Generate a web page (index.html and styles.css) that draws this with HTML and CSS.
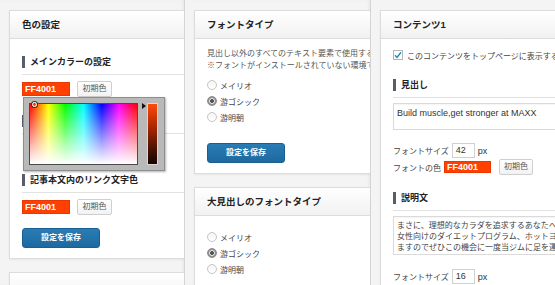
FILE: index.html
```html
<!DOCTYPE html>
<html lang="ja">

<head>
    <meta charset="UTF-8">
    <meta name="viewport" content="width=device-width, initial-scale=1.0">
    <title>テーマ設定</title>
    <link rel="stylesheet" href="styles.css">
</head>

<body>
    <div class="page">
        <!-- 色の設定 -->
        <div class="col col-1">
            <div class="card">
                <div class="card-head">色の設定</div>
                <div class="card-body">
                    <div class="sub"><span>メインカラーの設定</span></div>
                    <div class="color-row">
                        <span class="swatch">FF4001</span>
                        <button class="reset">初期色</button>
                        <div class="picker">
                            <div class="picker-area"><i class="picker-dot"></i></div>
                            <div class="picker-hue"></div>
                        </div>
                    </div>
                    <div class="sub"><span>サブカラーの設定</span></div>
                    <div class="color-row">
                        <span class="swatch swatch-under">FF4001</span>
                        <button class="reset">初期色</button>
                    </div>
                    <div class="sub"><span>記事本文内のリンク文字色</span></div>
                    <div class="color-row">
                        <span class="swatch">FF4001</span>
                        <button class="reset">初期色</button>
                    </div>
                    <button class="save">設定を保存</button>
                </div>
            </div>
            <div class="card">
                <div class="card-head"></div>
            </div>
        </div>

        <!-- フォント -->
        <div class="col col-2">
            <div class="card">
                <div class="card-head">フォントタイプ</div>
                <div class="card-body body-tight">
                    <p class="desc">見出し以外のすべてのテキスト要素で使用するフォントを選択してください。<br>※フォントがインストールされていない環境では代替フォントで表示されます。</p>
                    <div class="radios">
                        <label class="radio"><i class="dot"></i>メイリオ</label>
                        <label class="radio"><i class="dot on"></i>游ゴシック</label>
                        <label class="radio"><i class="dot"></i>游明朝</label>
                    </div>
                    <button class="save save-font">設定を保存</button>
                </div>
            </div>
            <div class="card">
                <div class="card-head">大見出しのフォントタイプ</div>
                <div class="card-body body-radios">
                    <div class="radios">
                        <label class="radio"><i class="dot"></i>メイリオ</label>
                        <label class="radio"><i class="dot on"></i>游ゴシック</label>
                        <label class="radio"><i class="dot"></i>游明朝</label>
                    </div>
                </div>
            </div>
        </div>

        <!-- コンテンツ -->
        <div class="col col-3">
            <div class="card">
                <div class="card-head">コンテンツ1</div>
                <div class="card-body body-content">
                    <div class="check-row">
                        <span class="check">
                            <svg width="8" height="8" viewBox="0 0 8 8"><path d="M1 4.2 L3 6.4 L7 1.2" fill="none" stroke="#1e8cbe" stroke-width="1.4"/></svg>
                        </span>
                        <span>このコンテンツをトップページに表示する</span>
                    </div>
                    <div class="sub sub-gap"><span>見出し</span></div>
                    <div class="field field-title">Build muscle,get stronger at MAXX</div>
                    <div class="opt-row opt-size">
                        フォントサイズ <span class="num">42</span> <span class="unit">px</span>
                    </div>
                    <div class="opt-row opt-color">
                        フォントの色 <span class="swatch swatch-sm">FF4001</span>
                        <button class="reset reset-sm">初期色</button>
                    </div>
                    <div class="sub sub-gap2"><span>説明文</span></div>
                    <div class="field field-desc">まさに、理想的なカラダを追求するあなたへ。パーソナルトレーニングから<br>女性向けのダイエットプログラム、ホットヨガまで幅広いメニューをご用意してい<br>ますのでぜひこの機会に一度当ジムに足を運んでみてください。</div>
                    <div class="opt-row opt-size2">
                        フォントサイズ <span class="num">16</span> <span class="unit">px</span>
                    </div>
                </div>
            </div>
        </div>
    </div>
</body>

</html>
```

FILE: styles.css
```css
* {
    box-sizing: border-box;
}

body {
    margin: 0;
    background-color: #f4f4f4;
    font-family: "Liberation Sans", "Noto Sans CJK JP", sans-serif;
    font-size: 8px;
    color: #444;
}

.page {
    display: flex;
    height: 285px;
    overflow: hidden;
}

.col {
    overflow: hidden;
    padding: 10px 0 0 9px;
    border-right: 1px solid #d4d4d4;
    box-shadow: inset -2px 0 2px rgba(0, 0, 0, 0.04);
}

.col-1 {
    width: 185px;
}

.col-2 {
    width: 186px;
}

.col-3 {
    flex: 1;
    border-right: 0;
    box-shadow: none;
}

.card {
    width: 270px;
    background-color: #fff;
    border: 1px solid #dcdcdc;
    box-shadow: 0 1px 2px rgba(0, 0, 0, 0.06);
    margin-bottom: 13px;
}

.card-head {
    height: 28px;
    padding: 0 12px;
    border-bottom: 1px solid #dcdcdc;
    background: linear-gradient(#fff, #f1f1f1);
    font-size: 9.5px;
    font-weight: bold;
    line-height: 27px;
    color: #222;
}

.card-body {
    padding: 17px 12px 10px;
}

.body-tight {
    padding-top: 9px;
}

.body-radios {
    padding-top: 8px;
    height: 80px;
}

.body-content {
    padding-top: 10px;
}

/* 小見出し */
.sub {
    padding-bottom: 6px;
    border-bottom: 1px solid #e2e2e2;
}

.sub span {
    display: block;
    padding-left: 5px;
    border-left: 3px solid #585d6c;
    font-size: 9px;
    font-weight: bold;
    line-height: 12px;
    color: #222;
}

.color-row+.sub {
    margin-top: 18px;
}

.color-row {
    position: relative;
    display: flex;
    align-items: center;
    gap: 7px;
    height: 16px;
    margin-top: 6px;
}

.swatch {
    width: 48px;
    height: 14px;
    padding-left: 2px;
    background-color: #ff4001;
    border: 1px solid #e83a00;
    color: #fff;
    font-size: 9px;
    font-weight: bold;
    line-height: 12px;
}

.swatch-under {
    margin-left: 1px;
}

.reset {
    width: 35px;
    height: 16px;
    padding: 0;
    border: 1px solid #cfcfcf;
    border-radius: 2px;
    background: linear-gradient(#fff, #f2f2f2);
    font-family: inherit;
    font-size: 8px;
    line-height: 14px;
    color: #555;
}

.save {
    display: block;
    width: 78px;
    height: 20px;
    margin-top: 13px;
    padding: 0;
    border: 1px solid #1b5f90;
    border-radius: 3px;
    background: linear-gradient(#2a7cb5, #1d69a0);
    font-family: inherit;
    font-size: 8px;
    font-weight: bold;
    line-height: 18px;
    color: #fff;
}

.save-font {
    margin-top: 18px;
}

/* カラーピッカー */
.picker {
    position: absolute;
    top: 16px;
    left: 1px;
    display: flex;
    gap: 9px;
    padding: 5px 6px 5px 5px;
    background-color: #b9b9b9;
    border: 1px solid #8e8e8e;
    box-shadow: 1px 1px 2px rgba(0, 0, 0, 0.3);
    z-index: 2;
}

.picker-area {
    position: relative;
    width: 109px;
    height: 62px;
    border: 1px solid #4a4a4a;
    background:
        linear-gradient(to top, #fff, rgba(255, 255, 255, 0)),
        linear-gradient(to right, #f00, #ff0 17%, #0f0 33%, #0ff 50%, #00f 67%, #f0f 83%, #f00);
}

.picker-dot {
    position: absolute;
    top: -2px;
    left: 2px;
    width: 5px;
    height: 5px;
    border: 1px solid #fff;
    border-radius: 50%;
    box-shadow: 0 0 0 1px #333;
}

.picker-hue {
    position: relative;
    width: 11px;
    height: 62px;
    border: 1px solid #d8d8d8;
    background: linear-gradient(#ff4a0a, #b32a02 35%, #4a1200 75%, #160400);
}

.picker-hue::before {
    content: "";
    position: absolute;
    top: -1px;
    left: -6px;
    border-left: 4px solid #111;
    border-top: 3px solid transparent;
    border-bottom: 3px solid transparent;
}

/* フォント */
.desc {
    margin: 0;
    font-size: 8px;
    line-height: 12px;
    white-space: nowrap;
    color: #555;
}

.radios {
    margin-top: 5px;
}

.radio {
    display: flex;
    align-items: center;
    gap: 3px;
    height: 16px;
    font-size: 8px;
    color: #444;
}

.dot {
    width: 10px;
    height: 10px;
    border: 1px solid #c6c6c6;
    border-radius: 50%;
    background: linear-gradient(#f4f4f4, #fff);
}

.dot.on {
    border-color: #8c8c8c;
    background: radial-gradient(circle, #555 0 1.6px, #e2e2e2 2.2px 2.6px, #8f8f8f 3.2px);
}

/* コンテンツ */
.check-row {
    display: flex;
    align-items: center;
    gap: 4px;
    height: 12px;
    font-size: 8px;
    white-space: nowrap;
    color: #444;
}

.check {
    display: flex;
    align-items: center;
    justify-content: center;
    flex: none;
    width: 10px;
    height: 10px;
    border: 1px solid #b5b5b5;
    background-color: #fff;
}

.sub-gap {
    margin-top: 18px;
}

.sub-gap2 {
    margin-top: 17px;
}

.field {
    margin-top: 5px;
    padding: 3px 3px;
    border: 1px solid #dadada;
    box-shadow: inset 0 1px 1px rgba(0, 0, 0, 0.04);
    white-space: nowrap;
    color: #333;
}

.field-title {
    height: 27px;
    font-size: 9px;
    line-height: 13px;
}

.field-desc {
    height: 39px;
    font-size: 8px;
    line-height: 11px;
    color: #444;
}

.opt-row {
    display: flex;
    align-items: center;
    gap: 3px;
    font-size: 8px;
    white-space: nowrap;
    color: #444;
}

.opt-size {
    height: 15px;
    margin-top: 13px;
}

.opt-color {
    height: 16px;
    margin-top: 1px;
}

.opt-size2 {
    height: 15px;
    margin-top: 14px;
}

.num {
    width: 23px;
    height: 15px;
    padding-left: 3px;
    border: 1px solid #d0d0d0;
    font-size: 9px;
    line-height: 13px;
    color: #333;
}

.unit {
    font-size: 9px;
    color: #333;
}

.swatch-sm {
    width: 47px;
    height: 12px;
    line-height: 10px;
}

.reset-sm {
    width: 34px;
    margin-left: 5px;
}
```
